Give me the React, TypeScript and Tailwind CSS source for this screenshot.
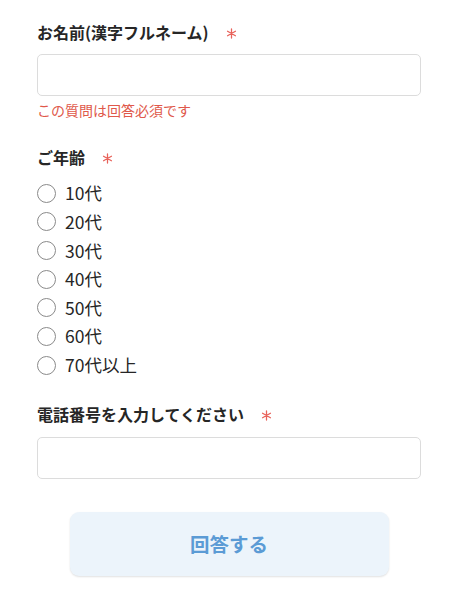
const ages = ['10代', '20代', '30代', '40代', '50代', '60代', '70代以上']

function Asterisk() {
  return (
    <svg viewBox="0 0 12 12" className="ml-[17px] mt-[3px] size-[11px]" stroke="#e8625a" strokeWidth="1.4" strokeLinecap="round">
      <path d="M6 1v10M1.7 3.5l8.6 5M1.7 8.5l8.6-5" />
    </svg>
  )
}

function Label({ text }: { text: string }) {
  return (
    <div className="flex items-center h-6">
      <span className="text-[16px] font-bold text-[#262626]">{text}</span>
      <Asterisk />
    </div>
  )
}

export default function App() {
  return (
    <div
      className="min-h-[600px] w-[458px] bg-white px-[37px] pt-[20px]"
      style={{ fontFamily: '"Noto Sans CJK JP", "Noto Sans", sans-serif' }}
    >
      <Label text="お名前(漢字フルネーム)" />
      <input
        type="text"
        className="mt-[10px] block h-[42px] w-full rounded-[5px] border border-[#dcdcdc] bg-white outline-none"
      />
      <p className="mt-[4px] text-[14px] leading-5 text-[#e0584a]">この質問は回答必須です</p>

      <div className="mt-[25px]">
        <Label text="ご年齢" />
      </div>
      <div className="mt-[10px] flex flex-col">
        {ages.map((age) => (
          <label key={age} className="flex h-[28.67px] items-center">
            <span className="size-[19px] rounded-full border-[1.5px] border-[#8a8a8a]" />
            <span className="ml-[9px] text-[17.5px] text-[#262626]">{age}</span>
          </label>
        ))}
      </div>

      <div className="mt-[22px]">
        <Label text="電話番号を入力してください" />
      </div>
      <input
        type="tel"
        className="mt-[11px] block h-[42px] w-full rounded-[5px] border border-[#dcdcdc] bg-white outline-none"
      />

      <div className="mt-[33px] flex justify-center">
        <button className="h-[64px] w-[319px] rounded-[9px] bg-[#ecf4fb] text-[19.5px] font-bold text-[#5b9bd5] shadow-[0_1px_2px_rgba(0,0,0,0.12)]">
          回答する
        </button>
      </div>
    </div>
  )
}
